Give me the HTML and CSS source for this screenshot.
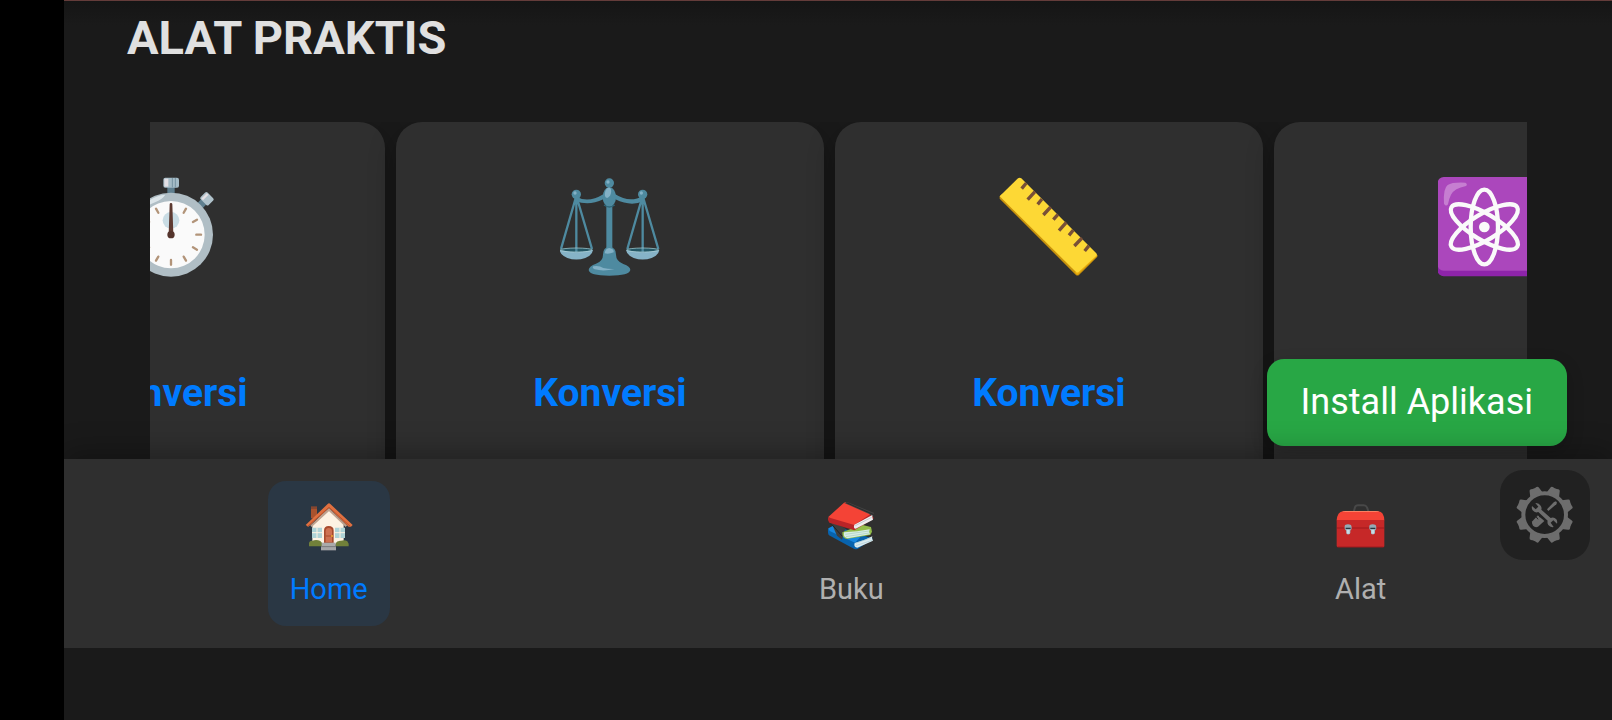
FILE: index.html
```html
<!DOCTYPE html>
<html lang="id">
<head>
<meta charset="utf-8">
<meta name="viewport" content="width=device-width, initial-scale=1">
<title>Alat Praktis</title>
<link rel="stylesheet" href="styles.css">
</head>
<body>
<div class="app">
  <main class="content">
    <h2 class="title">ALAT PRAKTIS</h2>
    <div class="carousel">
      <div class="track">
        <a class="card" href="#waktu">
          <svg class="card-icon" viewBox="-29 52 300 300" aria-hidden="true">
            <rect x="110" y="80" width="22" height="22" fill="#5f7f8f"/>
            <rect x="98" y="54" width="47" height="30" rx="6" fill="#a5bcc7"/>
            <path d="M101 57h12v24h-12z" fill="#e3dfe4"/><path d="M125 55v28M134 55v28" stroke="#7592a1" stroke-width="3"/>
            <g transform="rotate(45 121 225)"><rect x="110" y="82" width="22" height="24" fill="#5f7f8f"/><rect x="104" y="58" width="34" height="29" rx="5" fill="#b0c2cb"/><path d="M109 61h7v23h-7z" fill="#e6e0e4"/></g>
            <circle cx="121" cy="225" r="126" fill="#b0bec5"/>
            <path d="M18 168Q48 110 104 105Q96 118 75 127Q38 141 18 168Z" fill="#dce5e9"/>
            <circle cx="121" cy="225" r="101" fill="#fafafa"/>
            <circle cx="121" cy="182" r="25" fill="#c9dce4"/>
            <g stroke="#b29479" stroke-width="7" stroke-linecap="round">
              <path d="M121 301v14"/>
              <path d="M121 301v14" transform="rotate(30 121 225)"/><path d="M121 301v14" transform="rotate(60 121 225)"/><path d="M121 301v14" transform="rotate(90 121 225)"/><path d="M121 301v14" transform="rotate(120 121 225)"/><path d="M121 301v14" transform="rotate(150 121 225)"/><path d="M121 301v14" transform="rotate(210 121 225)"/><path d="M121 301v14" transform="rotate(240 121 225)"/><path d="M121 301v14" transform="rotate(270 121 225)"/><path d="M121 301v14" transform="rotate(300 121 225)"/><path d="M121 301v14" transform="rotate(330 121 225)"/>
            </g>
            <path d="M117 134a4 4 0 0 1 8 0l3 90h-14z" fill="#5d3a31"/><circle cx="121" cy="225" r="11" fill="#54342c"/>
          </svg>
          <span class="card-label">Konversi</span>
        </a>
        <a class="card" href="#berat">
          <svg class="card-icon" viewBox="60 52 300 300" aria-hidden="true">
            <g fill="#4e8aa0">
              <rect x="199" y="130" width="18" height="145"/>
              <path d="M106 110Q144 132 190 104L226 104Q270 132 310 108L310 124Q274 142 226 119L190 119Q144 140 106 123Z"/>
              <ellipse cx="208" cy="112" rx="20" ry="30"/>
              <circle cx="208" cy="70" r="14"/><circle cx="109" cy="104" r="14"/><circle cx="308" cy="104" r="14"/>
              <path d="M189 285Q189 262 208 262Q228 262 228 285Q228 304 250 313Q271 320 271 331Q268 348 208 348Q148 348 146 331Q147 319 168 312Q189 304 189 285Z"/>
            </g>
            <g fill="#245866"><ellipse cx="109" cy="271" rx="49" ry="7"/><ellipse cx="308" cy="271" rx="49" ry="7"/></g>
            <g fill="none" stroke="#4e8aa0" stroke-width="7"><path d="M108 112L63 268M109 112V280M110 112L156 268M307 112L262 268M308 112V280M309 112L355 268"/></g>
            <g fill="#86b3c7"><path d="M59 271Q109 284 159 271Q157 287 136 295Q109 304 82 295Q61 286 59 271Z"/><path d="M258 271Q308 284 358 271Q356 287 335 295Q308 304 281 295Q260 286 258 271Z"/></g>
            <g fill="none" stroke="#b4d5d9" stroke-width="2"><ellipse cx="109" cy="271" rx="48" ry="6"/><ellipse cx="308" cy="271" rx="48" ry="6"/></g>
            <g fill="#83b1c6"><ellipse cx="204" cy="99" rx="9" ry="16" transform="rotate(15 204 99)"/><circle cx="204" cy="67" r="5"/><circle cx="105" cy="100" r="5"/><circle cx="304" cy="100" r="5"/><path d="M194 281Q196 266 208 265Q223 268 221 278Q207 284 194 281Z"/><path d="M160 320Q176 316 190 325Q207 329 224 328Q190 336 164 329Q155 325 160 320Z"/></g>
            <path d="M192 136Q208 148 224 136" stroke="#2f6678" stroke-width="4" fill="none"/>
          </svg>
          <span class="card-label">Konversi</span>
        </a>
        <a class="card" href="#panjang">
          <svg class="card-icon" viewBox="56 52 300 300" aria-hidden="true">
            <path d="M58 110L64 104L342 282L351 286V291L296 346Q291 350 286 345L58 117Z" fill="#c8920c"/>
            <path d="M291 346L351 288L344 279L284 339Z" fill="#e8ac0d"/>
            <path d="M58 110L113 56Q118 52 123 56L348 281Q351 285 348 288L295 337Q291 340 287 337Z" fill="#fdd835"/>
            <path d="M138 70L124 87M164 96L142 120M185 118L172 134M211 142L189 166M233 164L219 180M258 188L236 213M279 211L266 227M305 235L282 259M326 258L313 274" stroke="#795037" stroke-width="10"/>
          </svg>
          <span class="card-label">Konversi</span>
        </a>
        <a class="card" href="#energi">
          <svg class="card-icon" viewBox="54 52 300 300" aria-hidden="true">
            <rect x="53" y="62" width="298" height="288" rx="18" fill="#8e24aa"/>
            <rect x="53" y="52" width="298" height="281" rx="18" fill="#ab47bc"/>
            <path d="M72 132Q69 86 83 76Q97 67 136 69Q144 73 138 79Q103 86 93 105Q87 116 84 134Q78 142 72 132Z" fill="#c67ed1"/>
            <g fill="none" stroke="#fafafa" stroke-width="13"><ellipse cx="193" cy="202" rx="41" ry="112"/><ellipse cx="193" cy="202" rx="39" ry="115" transform="rotate(59 193 202)"/><ellipse cx="193" cy="202" rx="39" ry="115" transform="rotate(-59 193 202)"/></g>
            <circle cx="193" cy="202" r="16" fill="#fafafa"/>
          </svg>
          <span class="card-label">Konversi</span>
        </a>
      </div>
    </div>
    <button class="install" type="button">Install Aplikasi</button>
  </main>
  <nav class="nav" aria-label="Navigasi utama">
    <a class="nav-item active" href="#home">
      <svg class="nav-icon" viewBox="39 34 150 150" aria-hidden="true">
        <path d="M60 51h18v35H60z" fill="#a9522e"/><path d="M60 51h18v7H60z" fill="#86462f"/>
        <path d="M64 104L114 56L158 104V164H64Z" fill="#fdf2e3"/>
        <path d="M60 110L114 60L166 110" fill="none" stroke="#bfa28f" stroke-width="6"/>
        <path d="M44 106L110 43Q114 39 118 43L185 106L180 111H173L114 55L52 111Z" fill="#e07040"/>
        <path d="M50 110L114 53L178 110" fill="none" stroke="#b9512b" stroke-width="3"/>
        <path d="M63 114h30v31H63zM132 114h30v31h-30z" fill="#aed3d7"/><path d="M78 114v31M63 129h30M147 114v31M132 129h30" stroke="#fdf2e3" stroke-width="3"/>
        <path d="M99 160V123Q99 109 113 109Q128 109 128 123V160Z" fill="#a84a2d"/><path d="M104 158V125Q104 115 113 115Q123 115 123 125V158Z" fill="#ce7151"/><path d="M104 139h19" stroke="#a84a2d" stroke-width="3"/><circle cx="123" cy="139" r="3" fill="#f2aa2c"/>
        <path d="M54 170V161Q55 152 64 153Q77 149 88 154L94 161V170ZM134 170V161Q138 152 149 153Q162 149 169 155L173 162V170Z" fill="#71803a"/>
        <path d="M92 159h42v11H92z" fill="#aaa"/><path d="M90 170h45v12H90z" fill="#a6a6a8"/><path d="M90 171h45" stroke="#777" stroke-width="2"/>
      </svg>
      <span>Home</span>
    </a>
    <a class="nav-item" href="#buku">
      <svg class="nav-icon" viewBox="43 34 150 150" aria-hidden="true">
        <path d="M49 118L66 107L184 147L139 177Q133 180 128 178L52 137Q48 133 49 118Z" fill="#0863ad"/>
        <path d="M50 116L65 109L146 142L130 159L54 124Z" fill="#1787df"/>
        <path d="M129 160Q156 154 182 140Q178 147 184 153L137 174Q125 173 129 160Z" fill="#ddecef"/>
        <path d="M132 161L179 144M132 168L181 152" stroke="#a8cbd7" stroke-width="2"/>
        <path d="M57 94L101 116L91 150L76 138Z" fill="#3e3e3e"/><path d="M61 105L91 139" stroke="#222" stroke-width="3"/>
        <path d="M92 128L150 105L178 112L181 126L176 136L105 148Q91 145 92 128Z" fill="#93bd4b"/>
        <path d="M97 128Q138 126 174 119Q170 127 175 134L108 146Q94 144 97 128Z" fill="#d9ede5"/>
        <path d="M101 134L172 124M103 141L173 130" stroke="#a5cdbb" stroke-width="2"/>
        <path d="M49 84Q47 92 53 99L128 122L185 88V82L174 75Z" fill="#ba2427"/>
        <path d="M49 83L97 39Q101 36 109 40L181 70L128 106Z" fill="#f44336"/>
        <path d="M98 40L107 37L188 70L181 77Z" fill="#424242"/>
        <path d="M104 39L184 74" stroke="#2b2b2b" stroke-width="3"/>
        <path d="M128 105L182 76Q181 83 184 90L132 117Q124 116 128 105Z" fill="#eeeef0"/><path d="M131 108L180 83" stroke="#c7cdd2" stroke-width="3"/>
      </svg>
      <span>Buku</span>
    </a>
    <a class="nav-item" href="#alat">
      <svg class="nav-icon" viewBox="43 34 150 150" aria-hidden="true">
        <path d="M96 67L100 53Q102 47 109 47H126Q133 47 136 53L141 67" fill="none" stroke="#484848" stroke-width="6"/>
        <path d="M45 92Q47 67 64 65H170Q187 67 188 92Z" fill="#f44336"/><path d="M61 67Q66 64 72 64H162Q170 64 173 67Z" fill="#fa8062"/>
        <path d="M45 91H188V169Q188 173 184 173H50Q45 173 45 168Z" fill="#c62828"/><path d="M45 115H188M47 172H186" stroke="#8d1418" stroke-width="2"/>
        <path d="M70 106Q79 101 88 106Q93 117 86 123V130Q79 139 74 130V123Q66 118 70 106ZM144 106Q153 101 162 106Q167 117 160 123V130Q153 139 148 130V123Q140 118 144 106Z" fill="#94aab5"/>
        <path d="M75 120h9v12h-9zM149 120h9v12h-9z" fill="#c7dce6"/><path d="M72 116h15M146 116h15" stroke="#26363f" stroke-width="4"/>
      </svg>
      <span>Alat</span>
    </a>
    <button class="settings" type="button" aria-label="Pengaturan">
      <svg class="settings-icon" viewBox="30 30 270 270" aria-hidden="true">
        <circle cx="164" cy="164" r="64" fill="none" stroke="#6d6d6d" stroke-width="12"/>
        <g fill="#6d6d6d">
          <path d="M144 100L149 82Q150 77 155 78L160 79H168L173 78Q178 77 179 82L184 100Z" transform="rotate(22.5 164 164)"/><path d="M144 100L149 82Q150 77 155 78L160 79H168L173 78Q178 77 179 82L184 100Z" transform="rotate(67.5 164 164)"/><path d="M144 100L149 82Q150 77 155 78L160 79H168L173 78Q178 77 179 82L184 100Z" transform="rotate(112.5 164 164)"/><path d="M144 100L149 82Q150 77 155 78L160 79H168L173 78Q178 77 179 82L184 100Z" transform="rotate(157.5 164 164)"/><path d="M144 100L149 82Q150 77 155 78L160 79H168L173 78Q178 77 179 82L184 100Z" transform="rotate(202.5 164 164)"/><path d="M144 100L149 82Q150 77 155 78L160 79H168L173 78Q178 77 179 82L184 100Z" transform="rotate(247.5 164 164)"/><path d="M144 100L149 82Q150 77 155 78L160 79H168L173 78Q178 77 179 82L184 100Z" transform="rotate(292.5 164 164)"/><path d="M144 100L149 82Q150 77 155 78L160 79H168L173 78Q178 77 179 82L184 100Z" transform="rotate(337.5 164 164)"/>
          <path d="M171 148L192 126L198 124L201 128L199 133L175 153Z"/>
          <path d="M127 184L144 166L163 183L144 200Q136 204 129 197Q123 190 127 184Z"/>
          <path d="M136 129Q147 128 152 137Q156 142 154 149L182 174Q192 170 199 178Q203 184 201 191L190 181L182 188L191 201Q181 203 175 195Q171 189 173 182L145 156Q135 160 128 151Q124 145 126 138L137 148L145 140Z"/>
        </g>
        <path d="M139 171L144 178M146 166L151 173M153 169L157 176" stroke="#212121" stroke-width="3"/>
      </svg>
    </button>
  </nav>
</div>
</body>
</html>
```
FILE: styles.css
```css
* {
  box-sizing: border-box;
}

body {
  margin: 0;
  padding-left: 64px;
  background: #000;
  font-family: Roboto, "Liberation Sans", sans-serif;
}

a {
  color: inherit;
  text-decoration: none;
}

button {
  border: 0;
  font-family: inherit;
}

.app {
  display: flex;
  flex-direction: column;
  height: 100vh;
  padding-bottom: 72px;
  background: #1a1a1a;
}

.content {
  position: relative;
  display: flex;
  flex: 1;
  flex-direction: column;
  min-height: 0;
  overflow: hidden;
  border-top: 1px solid #643c3a;
  background: linear-gradient(#151515, #1a1a1a 24px);
}

.title {
  margin: 0;
  padding: 10px 63px 57px;
  color: #e0e0e0;
  font-size: 47px;
  line-height: 54px;
}

.carousel {
  flex: 1;
  min-height: 0;
  margin: 0 85px 0 86px;
  overflow: hidden;
}

/* The row starts partly scrolled, with the first card cut at the left. */
.track {
  display: flex;
  gap: 11px;
  margin-left: -193px;
}

.card {
  display: flex;
  flex: 0 0 428px;
  flex-direction: column;
  align-items: center;
  gap: 92px;
  padding: 55px 20px 110px;
  border-radius: 26px;
  background: #2f2f2f;
  box-shadow: 0 11px 28px rgba(0, 0, 0, 0.3);
}

.card-icon {
  width: 100px;
  height: 100px;
}

.card-label {
  color: #007bff;
  font-size: 39px;
  font-weight: 700;
  line-height: 48px;
}

.install {
  position: absolute;
  right: 45px;
  bottom: 13px;
  padding: 22px 34px;
  border-radius: 17px;
  background: #28a745;
  box-shadow: 0 6px 17px rgba(0, 0, 0, 0.2);
  color: #fff;
  font-size: 36px;
  line-height: 43px;
}

.nav {
  position: relative;
  z-index: 1;
  display: flex;
  justify-content: space-around;
  padding: 22px 0;
  background: #2f2f2f;
  box-shadow: 0 -6px 28px rgba(0, 0, 0, 0.3);
  clip-path: inset(-40px 0 0 0);
}

.nav-item {
  display: flex;
  flex-direction: column;
  align-items: center;
  gap: 21px;
  padding: 20px 22px;
  border-radius: 18px;
  color: #b0b0b0;
  font-size: 29px;
  line-height: 34px;
}

.nav-item.active {
  background: #2a3744;
  color: #007bff;
}

.nav-icon {
  width: 50px;
  height: 50px;
}

.settings {
  position: absolute;
  top: 11px;
  right: 22px;
  padding: 0;
  border-radius: 23px;
  background: #212121;
}

.settings-icon {
  display: block;
  width: 90px;
  height: 90px;
}
```
